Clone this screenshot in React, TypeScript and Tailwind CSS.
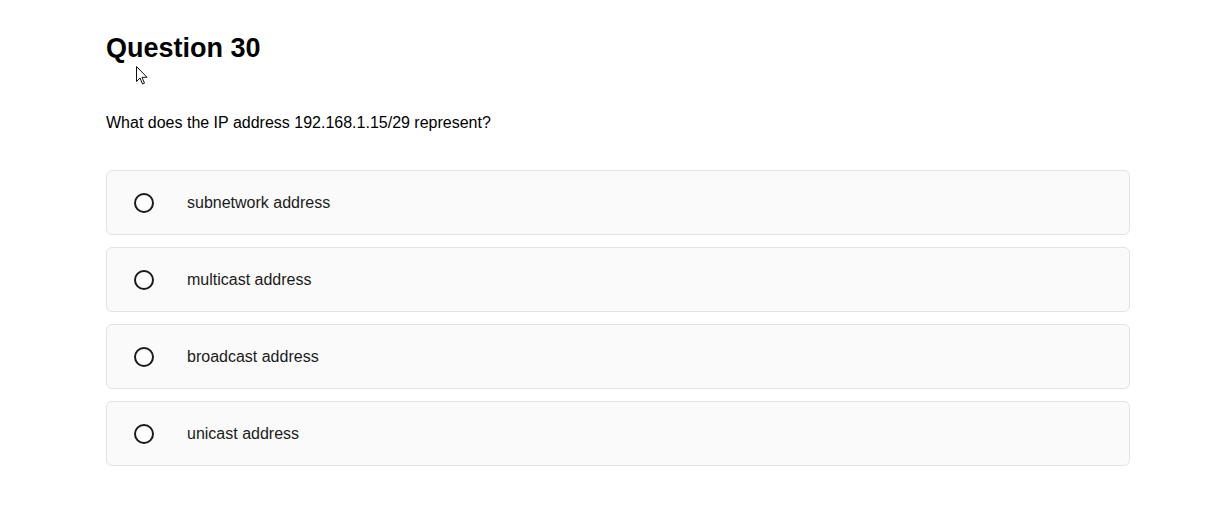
import React from "react";

const options = [
  "subnetwork address",
  "multicast address",
  "broadcast address",
  "unicast address",
];

function Cursor() {
  return (
    <svg
      className="absolute left-[136px] top-[66px]"
      width="13"
      height="20"
      viewBox="0 0 13 20"
      aria-hidden="true"
    >
      <path
        d="M0.5 0.5 L0.5 15.5 L4 12 L6.5 18 L8.5 17.2 L6 11.3 L11 11.3 Z"
        fill="#fff"
        stroke="#111"
        strokeWidth="1"
        strokeLinejoin="round"
      />
    </svg>
  );
}

export default function App() {
  return (
    <div className="relative min-h-[511px] w-full bg-white font-['Liberation_Sans',Arial,sans-serif] text-black">
      <Cursor />
      <div className="ml-[106px] w-[1024px] pt-[32px]">
        <h1 className="text-[27px] font-bold leading-[32px]">Question 30</h1>
        <p className="mt-[49px] text-[16px] leading-[20px]">
          What does the IP address 192.168.1.15/29 represent?
        </p>
        <div className="mt-[37px] flex flex-col gap-[12px]">
          {options.map((o) => (
            <label
              key={o}
              className="flex h-[65px] cursor-pointer items-center rounded-[6px] border border-[#e3e3e3] bg-[#fafafa] pl-[27px]"
            >
              <span className="box-border h-[20px] w-[20px] rounded-full border-2 border-[#1a1a1a] bg-white" />
              <span className="ml-[33px] text-[16px] leading-[20px] text-[#1a1a1a]">
                {o}
              </span>
            </label>
          ))}
        </div>
      </div>
    </div>
  );
}
